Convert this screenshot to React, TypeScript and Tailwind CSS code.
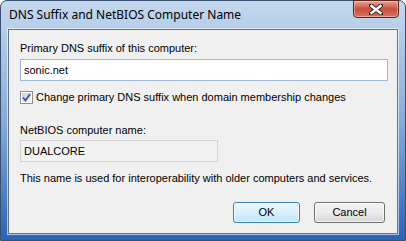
function CloseGlyph() {
  return (
    <svg width="14" height="11" viewBox="0 0 14 11">
      <path
        d="M2 1.5 L7 5.5 M12 1.5 L7 5.5 M2 9.5 L7 5.5 M12 9.5 L7 5.5"
        stroke="#3a1a1a"
        strokeWidth="4.2"
        strokeLinecap="square"
        fill="none"
      />
      <path
        d="M2.5 2 L11.5 9 M11.5 2 L2.5 9"
        stroke="#ffffff"
        strokeWidth="2.4"
        strokeLinecap="square"
        fill="none"
      />
    </svg>
  );
}

function CheckBox() {
  return (
    <div className="w-[13px] h-[13px] border border-[#8e8f8f] bg-white p-[1px]">
      <div className="w-full h-full bg-gradient-to-br from-[#cbcfd5] to-[#f6f6f6] flex items-center justify-center">
        <svg width="9" height="9" viewBox="0 0 9 9">
          <path d="M1 4.5 L3.5 7.5 L8 1" stroke="#3b55a0" strokeWidth="1.8" fill="none" />
        </svg>
      </div>
    </div>
  );
}

export default function App() {
  const body = { fontFamily: '"Liberation Sans", Arial, sans-serif' };

  return (
    <div className="w-[406px] h-[241px] overflow-hidden bg-white">
      <div className="w-[406px] h-[241px] rounded-t-[7px] border border-[#39506e] bg-gradient-to-b from-[#c4d8ee] via-[#87acd9] to-[#2a62b6] flex flex-col">
        {/* title bar */}
        <div className="h-[28px] flex items-start justify-between pl-[8px] pr-[6px]">
          <span
            className="mt-[7px] text-[12px] leading-[14px] text-black"
            style={{ fontFamily: '"Noto Sans", "Open Sans", sans-serif' }}
          >
            DNS Suffix and NetBIOS Computer Name
          </span>
          <div className="w-[46px] h-[18px] -mt-[1px] rounded-b-[4px] border border-[#5a2420] bg-gradient-to-b from-[#e8a596] via-[#c7503d] to-[#d3745c] flex items-center justify-center shadow-[inset_0_0_0_1px_rgba(255,220,210,0.5)]">
            <CloseGlyph />
          </div>
        </div>

        {/* client area */}
        <div
          className="mx-[7px] h-[205px] border border-[#5d7592] bg-[#f0f0f0] shadow-[0_0_0_1px_rgba(255,255,255,0.6)] flex flex-col pl-[11px] pr-[11px] pt-[12px] text-[11px] leading-[13px] text-black"
          style={body}
        >
          <span>Primary DNS suffix of this computer:</span>
          <div className="mt-[4px] w-[368px] h-[22px] border border-[#9cbbdc] bg-white flex items-center pl-[3px]">
            sonic.net
          </div>

          <div className="mt-[10px] flex items-center gap-[3px]">
            <CheckBox />
            <span>Change primary DNS suffix when domain membership changes</span>
          </div>

          <span className="mt-[20px]">NetBIOS computer name:</span>
          <div className="mt-[3px] w-[198px] h-[22px] border border-[#d3d3d3] bg-[#f2f2f2] flex items-center pl-[3px]">
            DUALCORE
          </div>

          <span className="mt-[10px]">This name is used for interoperability with older computers and services.</span>

          <div className="mt-[17px] flex justify-end gap-[14px] pr-[1px]">
            <button className="w-[67px] h-[21px] rounded-[3px] border border-[#3c7fb1] bg-gradient-to-b from-[#eaf6fd] via-[#d9f0fc] to-[#bee6fd] shadow-[inset_0_0_0_1px_rgba(255,255,255,0.7)] text-[11px]">
              OK
            </button>
            <button className="w-[71px] h-[21px] rounded-[3px] border border-[#707070] bg-gradient-to-b from-[#f2f2f2] via-[#ebebeb] to-[#d6d6d6] shadow-[inset_0_0_0_1px_rgba(255,255,255,0.7)] text-[11px]">
              Cancel
            </button>
          </div>
        </div>
      </div>
    </div>
  );
}
